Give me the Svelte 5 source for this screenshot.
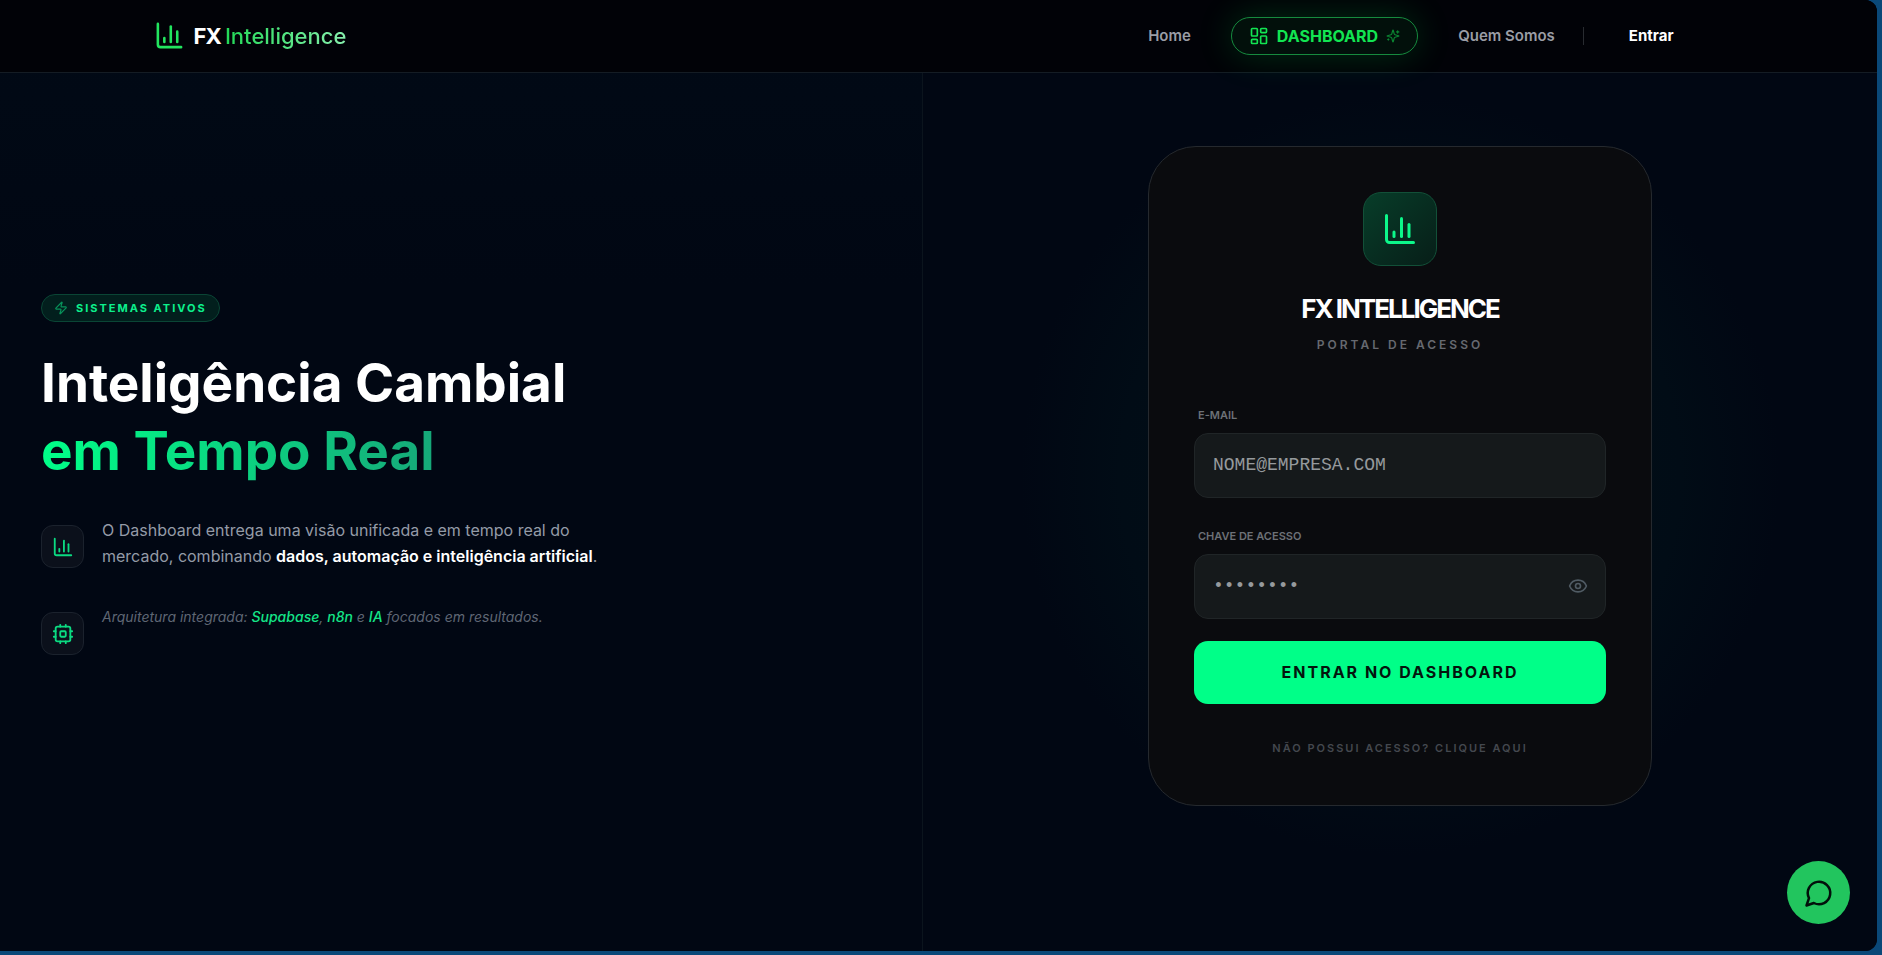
<script lang="ts">
  let email = $state('');
  let password = $state('');
  let showPassword = $state(false);

  function submit(event: SubmitEvent) {
    event.preventDefault();
  }
</script>

{#snippet chartIcon(size: number)}
  <svg class="icon" width={size} height={size} viewBox="0 0 24 24" aria-hidden="true">
    <path d="M3 3v16a2 2 0 0 0 2 2h16" />
    <path d="M18 17V9" />
    <path d="M13 17V5" />
    <path d="M8 17v-3" />
  </svg>
{/snippet}

<div class="window">
  <header>
    <div class="bar">
      <a class="brand" href="#home">
        {@render chartIcon(31)}
        <span>FX <em>Intelligence</em></span>
      </a>
      <nav>
        <a href="#home">Home</a>
        <a class="pill" href="#dashboard">
          <svg class="icon" width="20" height="20" viewBox="0 0 24 24" aria-hidden="true">
            <rect x="3" y="3" width="7" height="9" rx="1" />
            <rect x="14" y="3" width="7" height="5" rx="1" />
            <rect x="14" y="12" width="7" height="9" rx="1" />
            <rect x="3" y="16" width="7" height="5" rx="1" />
          </svg>
          <span>DASHBOARD</span>
          <svg class="icon faded" width="14" height="14" viewBox="0 0 24 24" aria-hidden="true">
            <path d="M9.937 15.5A2 2 0 0 0 8.5 14.063l-6.135-1.582a.5.5 0 0 1 0-.962L8.5 9.936A2 2 0 0 0 9.937 8.5l1.582-6.135a.5.5 0 0 1 .963 0L14.063 8.5A2 2 0 0 0 15.5 9.937l6.135 1.581a.5.5 0 0 1 0 .964L15.5 14.063a2 2 0 0 0-1.437 1.437l-1.582 6.135a.5.5 0 0 1-.963 0z" />
            <path d="M20 3v4" />
            <path d="M22 5h-4" />
            <path d="M4 17v2" />
            <path d="M5 18H3" />
          </svg>
        </a>
        <a href="#quem-somos">Quem Somos</a>
        <span class="separator"></span>
        <a class="login" href="#entrar">Entrar</a>
      </nav>
    </div>
  </header>

  <main>
    <section class="intro">
      <div class="badge">
        <svg class="icon faded" width="14" height="14" viewBox="0 0 24 24" aria-hidden="true">
          <path d="M4 14a1 1 0 0 1-.78-1.63l9.9-10.2a.5.5 0 0 1 .86.46l-1.92 6.02A1 1 0 0 0 13 10h7a1 1 0 0 1 .78 1.63l-9.9 10.2a.5.5 0 0 1-.86-.46l1.92-6.02A1 1 0 0 0 11 14z" />
        </svg>
        <span>SISTEMAS ATIVOS</span>
      </div>
      <h1>Inteligência Cambial<br /><span>em Tempo Real</span></h1>

      <div class="feature">
        <div class="tile">{@render chartIcon(22)}</div>
        <p>O Dashboard entrega uma visão unificada e em tempo real do<br />mercado, combinando <strong>dados, automação e inteligência artificial</strong>.</p>
      </div>
      <div class="feature">
        <div class="tile">
          <svg class="icon" width="22" height="22" viewBox="0 0 24 24" aria-hidden="true">
            <rect x="4" y="4" width="16" height="16" rx="2" />
            <rect x="9" y="9" width="6" height="6" rx="1" />
            <path d="M15 2v2M15 20v2M2 15h2M2 9h2M20 15h2M20 9h2M9 2v2M9 20v2" />
          </svg>
        </div>
        <p class="note">Arquitetura integrada: <b>Supabase</b>, <b>n8n</b> e <b>IA</b> focados em resultados.</p>
      </div>
    </section>

    <section class="access">
      <form class="card" onsubmit={submit}>
        <div class="emblem">{@render chartIcon(36)}</div>
        <h2>FX INTELLIGENCE</h2>
        <p class="subtitle">PORTAL DE ACESSO</p>

        <label for="email">E-MAIL</label>
        <div class="field">
          <input id="email" type="email" placeholder="NOME@EMPRESA.COM" bind:value={email} />
        </div>

        <label for="password">CHAVE DE ACESSO</label>
        <div class="field">
          <input id="password" type={showPassword ? 'text' : 'password'} placeholder="••••••••" bind:value={password} />
          <button class="reveal" type="button" aria-label="Mostrar chave" onclick={() => (showPassword = !showPassword)}>
            <svg class="icon" width="20" height="20" viewBox="0 0 24 24" aria-hidden="true">
              <path d="M2.062 12.348a1 1 0 0 1 0-.696 10.75 10.75 0 0 1 19.876 0 1 1 0 0 1 0 .696 10.75 10.75 0 0 1-19.876 0" />
              <circle cx="12" cy="12" r="3" />
            </svg>
          </button>
        </div>

        <button class="submit" type="submit">ENTRAR NO DASHBOARD</button>
        <a class="signup" href="#cadastro">NÃO POSSUI ACESSO? CLIQUE AQUI</a>
      </form>
    </section>
  </main>

  <button class="chat" type="button" aria-label="Abrir conversa">
    <svg class="icon" width="30" height="30" viewBox="0 0 24 24" aria-hidden="true">
      <path d="M7.9 20A9 9 0 1 0 4 16.1L2 22Z" />
    </svg>
  </button>
</div>

<style>
  :global(*) { box-sizing: border-box; }
  :global(body) { margin: 0; background: #0a4878; color: #fff; font-family: Inter, "Open Sans", sans-serif; }
  a { color: inherit; text-decoration: none; }
  p, h1, h2 { margin: 0; }
  button { border: 0; cursor: pointer; font: inherit; }
  .icon { display: block; flex: none; fill: none; stroke: currentColor; stroke-width: 2; stroke-linecap: round; stroke-linejoin: round; }
  .faded { opacity: .55; }

  .window { position: relative; display: grid; min-height: calc(100vh - 4px); margin: 0 5px 4px 0; overflow: hidden; border-radius: 0 12px 12px 0; background: #010713; }

  header { z-index: 1; grid-area: 1 / 1; align-self: start; height: 73px; border-bottom: 1px solid #141c24; background: #010207; }
  .bar { display: flex; align-items: center; justify-content: space-between; max-width: 1570px; height: 71px; margin: 0 auto; }
  .brand { display: flex; align-items: center; gap: 9px; color: #22e55f; font-size: 22px; font-weight: 700; letter-spacing: -1px; }
  .brand span { color: #fff; }
  .brand em { background: linear-gradient(90deg, #22d957, #86efac); background-clip: text; color: transparent; font-style: normal; font-weight: 500; letter-spacing: 0; }
  nav { display: flex; align-items: center; color: #9a9da5; font-size: 15px; font-weight: 600; }
  .pill { display: flex; align-items: center; gap: 8px; height: 38px; margin: 0 40px; padding: 0 17px; border: 1px solid #168a3e; border-radius: 19px; background: #02100b; box-shadow: 0 0 36px rgb(0 255 80 / 18%); color: #12e552; font-size: 16px; font-weight: 700; }
  .separator { width: 1px; height: 18px; margin: 0 45px 0 28px; background: #282b30; }
  .login { padding-right: 50px; color: #fff; font-weight: 700; }

  main { display: grid; grid-area: 1 / 1; grid-template-columns: 923fr 954fr; }
  .intro { display: flex; flex-direction: column; align-items: flex-start; justify-content: center; padding: 0 41px 2px; border-right: 1px solid #0b141d; background: linear-gradient(#010a16, #010713 30%); }
  .badge { display: flex; align-items: center; gap: 8px; height: 28px; padding: 0 12px; border: 1px solid #0a4535; border-radius: 14px; background: #021f1d; color: #0cf08c; font-size: 11px; font-weight: 700; letter-spacing: 2px; }
  h1 { margin: 27px 0 32px; font-size: 53px; font-weight: 700; line-height: 68px; }
  h1 span { background: linear-gradient(90deg, #00ff88, #16a879); background-clip: text; color: transparent; }
  .feature { display: flex; gap: 18px; color: #949ba7; }
  .feature + .feature { margin-top: 35px; }
  .tile { display: grid; flex: none; place-items: center; width: 43px; height: 43px; margin-top: 8px; border: 1px solid #1b222d; border-radius: 12px; background: #0b101b; color: #0bdb82; }
  .feature p { font-size: 16px; line-height: 26px; }
  .feature strong { color: #fff; font-weight: 600; }
  .feature .note { color: #5f6673; font-size: 14px; font-style: italic; }
  .note b { color: #14e487; font-weight: 500; }

  .access { display: grid; place-items: center; background: radial-gradient(circle at center, #011219 0, #010c16 280px, #010713 380px); }
  .card { display: flex; flex-direction: column; width: 504px; padding: 45px 45px 49px; border: 1px solid #25292e; border-radius: 48px; background: #0a0b0e; }
  .emblem { display: grid; align-self: center; place-items: center; width: 74px; height: 74px; border: 1px solid #125038; border-radius: 18px; background: linear-gradient(135deg, #073d29, #071e18); color: #0cf88a; }
  h2 { margin-top: 25px; font-size: 26px; font-weight: 700; line-height: 36px; letter-spacing: -2px; text-align: center; }
  .subtitle { margin: 8px 0 52px; color: #666970; font-size: 12px; font-weight: 600; line-height: 20px; letter-spacing: 3px; text-align: center; }
  label { margin-left: 4px; color: #6d7177; font-size: 11px; font-weight: 600; line-height: 16px; }
  .field { display: flex; align-items: center; height: 65px; margin: 10px 0 30px; border: 1px solid #202527; border-radius: 14px; background: #15191b; }
  input { flex: 1; min-width: 0; height: 100%; padding: 0 18px; border: 0; outline: 0; background: none; color: #fff; font: 18px "Liberation Mono", monospace; }
  input::placeholder { color: #969a9d; opacity: 1; }
  .reveal { padding: 0 17px; background: none; color: #505b64; }
  .submit { height: 63px; margin-top: -8px; border-radius: 14px; background: #00ff88; color: #04150d; font-size: 16px; font-weight: 700; letter-spacing: 2px; }
  .signup { align-self: center; margin-top: 36px; color: #44484e; font-size: 11px; font-weight: 600; line-height: 16px; letter-spacing: 2px; }

  .chat { position: absolute; right: 27px; bottom: 27px; z-index: 1; display: grid; place-items: center; width: 63px; height: 63px; padding: 0; border-radius: 50%; background: #22c55e; color: #02100b; }

  @media (max-width: 1100px) {
    header { grid-area: auto; }
    main { grid-area: auto; grid-template-columns: 1fr; }
    .bar { padding: 0 20px; }
    .intro, .access { padding: 48px 24px; }
    .card { width: min(504px, 100%); }
  }
</style>
